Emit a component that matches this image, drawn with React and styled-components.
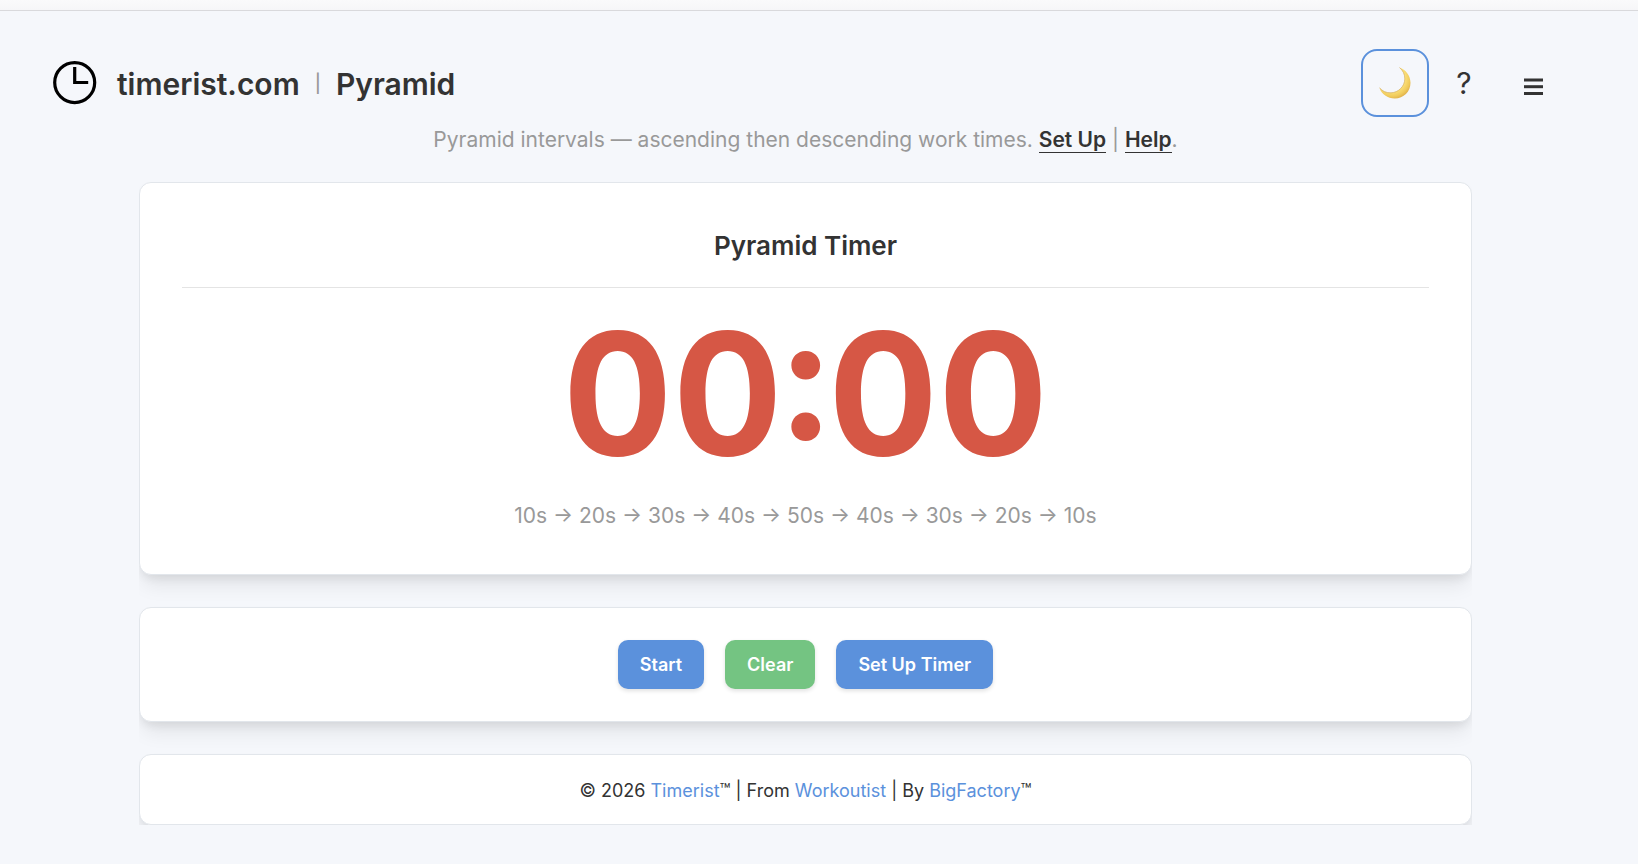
import { useState } from "react";
import styled, { createGlobalStyle } from "styled-components";

const STEPS = [10, 20, 30, 40, 50, 40, 30, 20, 10];

const formatTime = (seconds) => {
  const m = String(Math.floor(seconds / 60)).padStart(2, "0");
  const s = String(seconds % 60).padStart(2, "0");
  return `${m}:${s}`;
};

const ClockLogo = () => (
  <svg width="44" height="44" viewBox="0 0 44 44" fill="none" aria-hidden="true">
    <circle cx="21.700" cy="21.600" r="20" stroke="#000" strokeWidth="3.2" />
    <path d="M21.700 6V21.500h13.500" stroke="#000" strokeWidth="3.2" />
  </svg>
);

const Moon = () => (
  <svg width="32" height="32" viewBox="0 0 32 32" aria-hidden="true">
    <defs>
      <radialGradient id="moon" cx="0.4" cy="0.35" r="0.68">
        <stop offset="0" stopColor="#fdf0a0" />
        <stop offset="0.62" stopColor="#fbe079" />
        <stop offset="0.85" stopColor="#f0cb5c" />
        <stop offset="1" stopColor="#e0b04a" />
      </radialGradient>
    </defs>
    <path
      d="M20.5 0.5C26.500 2.500 31.500 8.500 31.500 15.800C31.500 24.800 24.600 31.500 15.800 31.500C8.800 31.500 2.500 27.500 0.500 20.800C3.500 24.300 7.500 26 12 25.800C19.500 25.500 25.600 19.500 25.800 12C25.900 7.500 24 3.500 20.500 0.500Z"
      fill="url(#moon)"
    />
    <path
      d="M0.500 20.800C3.500 24.300 7.500 26 12 25.800C19.500 25.500 25.600 19.500 25.800 12C25.900 7.500 24 3.500 20.500 0.500"
      fill="none"
      stroke="#cfa552"
      strokeWidth="0.6"
    />
  </svg>
);

const MenuBars = () => (
  <svg width="20" height="24" viewBox="0 0 20 24" fill="#333" aria-hidden="true">
    <rect y="7.500" width="19" height="3" />
    <rect y="14.200" width="19" height="3" />
    <rect y="21" width="19" height="3" />
  </svg>
);

const App = () => {
  const [seconds, setSeconds] = useState(0);

  return (
    <>
      <GlobalStyle />
      <TopStrip />
      <Page>
        <Header>
          <Brand href="#home">
            <ClockLogo />
            <Title>
              <span>timerist.com</span>
              <Divider>|</Divider>
              <span>Pyramid</span>
            </Title>
          </Brand>
          <Nav>
            <ThemeButton aria-label="Dark mode">
              <Moon />
            </ThemeButton>
            <NavButton aria-label="Help">?</NavButton>
            <NavButton aria-label="Menu">
              <MenuBars />
            </NavButton>
          </Nav>
        </Header>

        <Intro>
          Pyramid intervals — ascending then descending work times.{" "}
          <IntroLink href="#setup">Set Up</IntroLink> |{" "}
          <IntroLink href="#help">Help</IntroLink>.
        </Intro>

        <Main>
          <TimerCard>
            <Heading>Pyramid Timer</Heading>
            <Time>{formatTime(seconds)}</Time>
            <Steps>{STEPS.map((s) => `${s}s`).join(" → ")}</Steps>
          </TimerCard>

          <ControlsCard>
            <Button onClick={() => setSeconds(STEPS[0])}>Start</Button>
            <Button $color="#74c482" onClick={() => setSeconds(0)}>
              Clear
            </Button>
            <Button>Set Up Timer</Button>
          </ControlsCard>

          <FooterCard as="footer">
            © 2026 <FooterLink href="#timerist">Timerist</FooterLink>™ | From{" "}
            <FooterLink href="#workoutist">Workoutist</FooterLink> | By{" "}
            <FooterLink href="#bigfactory">BigFactory</FooterLink>™
          </FooterCard>
        </Main>
      </Page>
    </>
  );
};

const GlobalStyle = createGlobalStyle`
* {
  box-sizing: border-box;
}

body {
  margin: 0;
  background: #f5f7fb;
  color: #333;
  font-family: Inter, "Liberation Sans", sans-serif;
}
`

const TopStrip = styled.div`
height: 11px;
background: linear-gradient(#fafafb, #f6f6f8);
border-bottom: 1px solid #d9d9dc;
`

const Page = styled.div`
margin-right: 27px;
padding: 38px 0;
`

const Header = styled.header`
display: flex;
align-items: center;
justify-content: space-between;
padding: 0 42px 0 53px;
`

const Brand = styled.a`
display: flex;
align-items: center;
gap: 20px;
color: inherit;
text-decoration: none;
`

const Title = styled.h1`
display: flex;
align-items: center;
gap: 15px;
margin: 0;
padding-top: 2px;
font-size: 30px;
font-weight: 600;
line-height: 36px;
`

const Divider = styled.span`
color: #999;
font-size: 18px;
font-weight: 500;
`

const Nav = styled.nav`
display: flex;
align-items: center;
`

const NavButton = styled.button`
display: flex;
align-items: center;
justify-content: center;
width: 70px;
height: 68px;
padding: 0;
border: 0;
background: none;
color: #333;
font-family: inherit;
font-size: 30px;
font-weight: 400;
cursor: pointer;
`

const ThemeButton = styled(NavButton)`
width: 68px;
border: 2px solid #5b91dc;
border-radius: 16px;
`

const Intro = styled.p`
margin: 8px 0 28px;
color: #999;
font-size: 21px;
line-height: 29px;
text-align: center;
`

const IntroLink = styled.a`
border-bottom: 1px solid #333;
color: #333;
font-weight: 600;
text-decoration: none;
`

const Main = styled.main`
display: flex;
flex-direction: column;
gap: 32px;
margin: 0 139px;
overflow: hidden;
`

const Card = styled.section`
border: 1px solid #e2e6eb;
border-radius: 12px;
background: #fff;
box-shadow: 0 14px 20px -4px rgba(0, 0, 0, 0.08), 0 5px 10px -2px rgba(0, 0, 0, 0.08);
text-align: center;
`

const TimerCard = styled(Card)`
padding: 42px;
`

const Heading = styled.h2`
margin: 0;
padding-bottom: 20px;
border-bottom: 1px solid #e4e4e4;
font-size: 26px;
font-weight: 600;
line-height: 42px;
`

const Time = styled.div`
margin: 20px 0 22px;
color: #d65745;
font-size: 170px;
font-weight: 700;
font-variant-numeric: tabular-nums;
line-height: 170px;
`

const Steps = styled.p`
margin: 0;
color: #999;
font-size: 21px;
line-height: 32px;
`

const ControlsCard = styled(Card)`
display: flex;
justify-content: center;
gap: 21px;
padding: 32px;
`

const Button = styled.button`
height: 49px;
padding: 0 22px;
border: 0;
border-radius: 10px;
background: ${(props) => props.$color || "#5b91dc"};
box-shadow: 0 2px 4px rgba(0, 0, 0, 0.12);
color: #fff;
font-family: inherit;
font-size: 18px;
font-weight: 600;
cursor: pointer;
`

const FooterCard = styled(Card)`
padding: 22px 20px 20px;
font-size: 18px;
line-height: 27px;
`

const FooterLink = styled.a`
color: #5b91dc;
text-decoration: none;
`

export default App;
